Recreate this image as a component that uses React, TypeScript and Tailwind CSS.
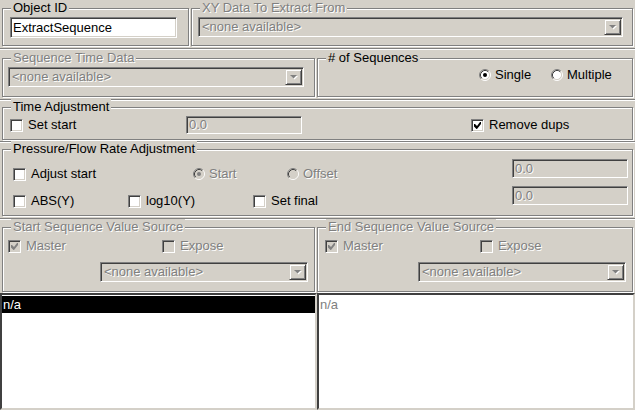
import React from 'react';

const dis = "text-[#808080] [text-shadow:1px_1px_0_#fff]";
const sunken =
  "border border-t-[#808080] border-l-[#808080] border-b-white border-r-white shadow-[inset_1px_1px_0_#404040,inset_-1px_-1px_0_#d4d0c8]";
const rowSep = "border-t border-t-[#808080] shadow-[inset_0_1px_0_#fff]";

function Group({ label, disabled, className = "", children }: { label: string; disabled?: boolean; className?: string; children?: React.ReactNode }) {
  return (
    <div className={`relative border border-[#808080] shadow-[inset_1px_1px_0_#fff,1px_1px_0_#fff] ${className}`}>
      <span className={`absolute -top-[9px] left-[8px] px-[2px] bg-[#d4d0c8] leading-[16px] whitespace-nowrap ${disabled ? dis : "text-black"}`}>
        {label}
      </span>
      {children}
    </div>
  );
}

function Check({ checked, disabled }: { checked?: boolean; disabled?: boolean }) {
  return (
    <span className={`w-[13px] h-[13px] shrink-0 flex items-center justify-center ${sunken} ${disabled ? "bg-[#d4d0c8]" : "bg-white"}`}>
      {checked && (
        <svg width="7" height="7" viewBox="0 0 7 7">
          <path d="M0 2h1l2 2 3-4h1v2L3 7H2.5L0 4.5z" fill={disabled ? "#808080" : "#000"} />
        </svg>
      )}
    </span>
  );
}

function Radio({ checked, disabled }: { checked?: boolean; disabled?: boolean }) {
  return (
    <svg width="12" height="12" viewBox="0 0 12 12" className="shrink-0">
      <circle cx="6" cy="6" r="4.5" fill={disabled ? "#d4d0c8" : "#fff"} />
      <path d="M2.11 9.89A5.5 5.5 0 0 1 9.89 2.11" fill="none" stroke="#808080" />
      <path d="M9.89 2.11A5.5 5.5 0 0 1 2.11 9.89" fill="none" stroke="#fff" />
      <path d="M2.82 9.18A4.5 4.5 0 0 1 9.18 2.82" fill="none" stroke="#404040" />
      <path d="M9.18 2.82A4.5 4.5 0 0 1 2.82 9.18" fill="none" stroke="#d4d0c8" />
      {checked && <circle cx="6" cy="6" r="2" fill={disabled ? "#808080" : "#000"} />}
    </svg>
  );
}

function Combo({ className = "" }: { className?: string }) {
  return (
    <div className={`h-[20px] flex items-center bg-[#d4d0c8] ${sunken} ${className}`}>
      <span className={`flex-1 pl-[3px] leading-[16px] whitespace-nowrap ${dis}`}>&lt;none available&gt;</span>
      <span className="w-[17px] h-[16px] mr-[1px] flex items-center justify-center bg-[#d4d0c8] border border-t-[#d4d0c8] border-l-[#d4d0c8] border-b-[#404040] border-r-[#404040] shadow-[inset_1px_1px_0_#fff,inset_-1px_-1px_0_#808080]">
        <svg width="8" height="5" viewBox="0 0 8 5">
          <path d="M1 1h7L4.5 4.5z" fill="#fff" />
          <path d="M0 0h7L3.5 3.5z" fill="#808080" />
        </svg>
      </span>
    </div>
  );
}

function Field({ value, className = "" }: { value: string; className?: string }) {
  return (
    <div className={`flex items-center bg-[#d4d0c8] ${sunken} ${className}`}>
      <span className={`pl-[2px] leading-[14px] ${dis}`}>{value}</span>
    </div>
  );
}

function Opt({ kind, label, checked, disabled, className = "" }: { kind: "check" | "radio"; label: string; checked?: boolean; disabled?: boolean; className?: string }) {
  return (
    <div className={`flex items-center ${kind === "check" ? "gap-[5px]" : "gap-[4px]"} ${className}`}>
      {kind === "check" ? <Check checked={checked} disabled={disabled} /> : <Radio checked={checked} disabled={disabled} />}
      <span className={`leading-[16px] whitespace-nowrap ${disabled ? dis : "text-black"}`}>{label}</span>
    </div>
  );
}

export default function App() {
  return (
    <div className="w-[635px] h-[410px] overflow-hidden bg-[#d4d0c8] flex flex-col text-[13px] font-['Liberation_Sans',Arial,sans-serif]">
      {/* object id + xy source */}
      <div className="h-[48px] shrink-0 flex gap-[2px] px-[2px] pt-[8px]">
        <Group label="Object ID" className="w-[187px] h-[38px] shrink-0 pl-[7px] pt-[8px]">
          <div className={`w-[167px] h-[21px] flex items-center bg-white ${sunken}`}>
            <span className="pl-[2px] text-black leading-[16px]">ExtractSequence</span>
          </div>
        </Group>
        <Group label="XY Data To Extract From" disabled className="flex-1 h-[38px] pl-[6px] pt-[8px]">
          <Combo className="w-[425px]" />
        </Group>
      </div>

      {/* time data + sequence count */}
      <div className={`h-[51px] shrink-0 flex gap-[2px] px-[2px] pt-[9px] ${rowSep}`}>
        <Group label="Sequence Time Data" disabled className="w-[313px] h-[39px] shrink-0 pl-[5px] pt-[8px]">
          <Combo className="w-[296px]" />
        </Group>
        <Group label="# of Sequences" className="flex-1 h-[39px] flex items-start pl-[161px] pt-[8px]">
          <Opt kind="radio" label="Single" checked className="w-[72px] h-[16px]" />
          <Opt kind="radio" label="Multiple" className="h-[16px]" />
        </Group>
      </div>

      {/* time adjustment */}
      <div className={`h-[42px] shrink-0 px-[2px] pt-[7px] ${rowSep}`}>
        <Group label="Time Adjustment" className="h-[33px] flex items-start pl-[7px] pt-[8px]">
          <Opt kind="check" label="Set start" className="w-[176px] h-[18px]" />
          <Field value="0.0" className="w-[116px] h-[18px]" />
          <Opt kind="check" label="Remove dups" checked className="ml-[169px] h-[18px]" />
        </Group>
      </div>

      {/* pressure / flow rate */}
      <div className={`h-[77px] shrink-0 px-[2px] pt-[7px] ${rowSep}`}>
        <Group label="Pressure/Flow Rate Adjustment" className="h-[67px] flex justify-between pl-[10px] pr-[4px]">
          <div className="flex flex-col gap-[7px] pt-[14px]">
            <div className="flex h-[20px]">
              <Opt kind="check" label="Adjust start" className="w-[180px]" />
              <Opt kind="radio" label="Start" checked disabled className="w-[94px]" />
              <Opt kind="radio" label="Offset" disabled />
            </div>
            <div className="flex h-[20px]">
              <Opt kind="check" label="ABS(Y)" className="w-[115px]" />
              <Opt kind="check" label="log10(Y)" className="w-[125px]" />
              <Opt kind="check" label="Set final" />
            </div>
          </div>
          <div className="flex flex-col gap-[8px] pt-[9px]">
            <Field value="0.0" className="w-[116px] h-[19px]" />
            <Field value="0.0" className="w-[116px] h-[19px]" />
          </div>
        </Group>
      </div>

      {/* start / end value source */}
      <div className={`h-[75px] shrink-0 flex gap-[2px] px-[2px] pt-[8px] ${rowSep}`}>
        <Group label="Start Sequence Value Source" disabled className="w-[313px] h-[65px] shrink-0 pl-[5px] pt-[10px]">
          <div className="flex h-[16px]">
            <Opt kind="check" label="Master" checked disabled className="w-[154px]" />
            <Opt kind="check" label="Expose" disabled />
          </div>
          <Combo className="w-[208px] mt-[8px] ml-[92px]" />
        </Group>
        <Group label="End Sequence Value Source" disabled className="flex-1 h-[65px] pl-[7px] pt-[10px]">
          <div className="flex h-[16px]">
            <Opt kind="check" label="Master" checked disabled className="w-[155px]" />
            <Opt kind="check" label="Expose" disabled />
          </div>
          <Combo className="w-[208px] mt-[8px] ml-[93px]" />
        </Group>
      </div>

      {/* value lists */}
      <div className="flex-1 flex">
        <div className="w-[317px] shrink-0 bg-white border-2 border-t-[#404040] border-l-[#404040] border-b-[#d4d0c8] border-r-[#d4d0c8] pt-[1px]">
          <div className="h-[17px] bg-black text-white leading-[17px] pl-[1px]">n/a</div>
        </div>
        <div className="flex-1 bg-white border-2 border-t-[#404040] border-l-[#404040] border-b-[#d4d0c8] border-r-[#d4d0c8] pt-[1px]">
          <div className="h-[17px] text-[#808080] leading-[17px] pl-[1px]">n/a</div>
        </div>
      </div>
    </div>
  );
}
